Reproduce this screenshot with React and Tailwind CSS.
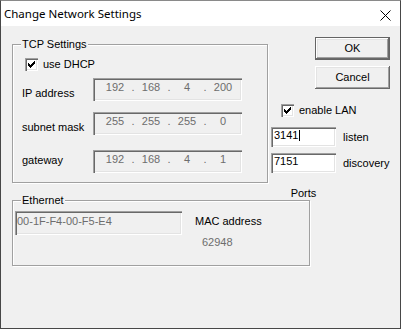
import React from "react";

const F = "font-['Liberation_Sans',Arial,sans-serif] text-[11px] leading-[13px]";
const SUNKEN =
  "shadow-[inset_1px_1px_0_#a0a0a0,inset_2px_2px_0_#696969,inset_-1px_-1px_0_#ffffff,inset_-2px_-2px_0_#e3e3e3]";
const RAISED =
  "shadow-[inset_-1px_-1px_0_#696969,inset_1px_1px_0_#ffffff,inset_-2px_-2px_0_#a0a0a0,inset_2px_2px_0_#e3e3e3]";

function CheckBox() {
  return (
    <div className={`w-[13px] h-[13px] bg-white shrink-0 relative ${SUNKEN}`}>
      <svg width="13" height="13" viewBox="0 0 13 13" className="absolute left-0 top-0" shapeRendering="crispEdges">
        <path d="M3 5 V8 L5 10 L10 5 V2 L5 7 Z" fill="#000" />
      </svg>
    </div>
  );
}

function IpField({ values }) {
  return (
    <div className={`w-[149px] h-[23px] flex items-start pt-[3px] pl-[4px] text-[#6d6d6d] ${SUNKEN}`}>
      {values.map((v, i) => (
        <React.Fragment key={i}>
          {i > 0 && (
            <span className="w-0 flex justify-center overflow-visible">
              <span>.</span>
            </span>
          )}
          <span className="w-[36px] text-center">{v}</span>
        </React.Fragment>
      ))}
    </div>
  );
}

function GroupBox({ label, className, children }) {
  return (
    <div
      className={`relative border border-[#a0a0a0] shadow-[inset_1px_1px_0_#ffffff,1px_1px_0_#ffffff] ${className}`}
    >
      <span className="absolute -top-[8px] left-[8px] px-[1px] bg-[#f0f0f0] leading-[14px]">{label}</span>
      {children}
    </div>
  );
}

export default function App() {
  return (
    <div className={`w-[401px] h-[329px] border border-[#474747] border-t-[#8a8a8a] flex flex-col bg-[#f0f0f0] text-black ${F}`}>
      {/* title bar */}
      <div className="h-[25px] bg-white flex items-center justify-between pl-[3px] shrink-0">
        <span className="font-['Noto_Sans','Open_Sans',sans-serif] text-[11.5px] leading-[16px] text-black">
          Change Network Settings
        </span>
        <svg width="11" height="11" viewBox="0 0 11 11" className="mr-[9px] mt-[3px]">
          <path d="M0.5 0.5 L10.5 10.5 M10.5 0.5 L0.5 10.5" stroke="#000" strokeWidth="1" />
        </svg>
      </div>

      {/* body */}
      <div className="flex-1 pl-[11px]">
        <div className="flex h-[174px]">
          <GroupBox label="TCP Settings" className="mt-[18px] w-[256px] h-[139px] shrink-0">
            <div className="flex items-center mt-[13px] pl-[12px]">
              <CheckBox />
              <span className="ml-[5px]">use DHCP</span>
            </div>
            <div className="flex items-start mt-[7px] pl-[9px]">
              <span className="w-[71px] pt-[9px]">IP address</span>
              <IpField values={["192", "168", "4", "200"]} />
            </div>
            <div className="flex items-start mt-[11px] pl-[9px]">
              <span className="w-[71px] pt-[9px]">subnet mask</span>
              <IpField values={["255", "255", "255", "0"]} />
            </div>
            <div className="flex items-start mt-[15px] pl-[9px]">
              <span className="w-[71px] pt-[4px]">gateway</span>
              <IpField values={["192", "168", "4", "1"]} />
            </div>
          </GroupBox>

          <div className="ml-[3px] flex flex-col">
            <button
              className={`ml-[44px] mt-[11px] w-[75px] h-[23px] border border-[#646464] bg-[#f0f0f0] flex items-center justify-center ${RAISED}`}
            >
              OK
            </button>
            <button
              className={`ml-[44px] mt-[6px] w-[75px] h-[23px] bg-[#f0f0f0] flex items-center justify-center ${RAISED}`}
            >
              Cancel
            </button>
            <div className="flex items-center ml-[10px] mt-[15px]">
              <CheckBox />
              <span className="ml-[5px]">enable LAN</span>
            </div>
            <div className="flex items-center mt-[10px]">
              <div className={`w-[65px] h-[20px] bg-white pl-[3px] pt-[2px] flex items-start ${SUNKEN}`}>
                <span>3141</span>
                <span className="inline-block w-[1px] h-[11px] bg-black ml-[1px] mt-[1px]" />
              </div>
              <span className="ml-[7px]">listen</span>
            </div>
            <div className="flex items-center mt-[6px]">
              <div className={`w-[65px] h-[20px] bg-white pl-[3px] pt-[2px] ${SUNKEN}`}>
                <span>7151</span>
              </div>
              <span className="ml-[7px]">discovery</span>
            </div>
            <div className="w-[65px] text-center mt-[14px]">Ports</div>
          </div>
        </div>

        <GroupBox label="Ethernet" className="w-[298px] h-[66px]">
          <div className="flex items-start mt-[10px] ml-[2px]">
            <div className={`w-[167px] h-[24px] pl-[2px] pt-[4px] text-[#6d6d6d] ${SUNKEN}`}>
              00-1F-F4-00-F5-E4
            </div>
            <div className="ml-[13px] pt-[4px] flex flex-col">
              <span>MAC address</span>
              <span className="ml-[7px] mt-[8px] text-[#6d6d6d]">62948</span>
            </div>
          </div>
        </GroupBox>
      </div>
    </div>
  );
}
